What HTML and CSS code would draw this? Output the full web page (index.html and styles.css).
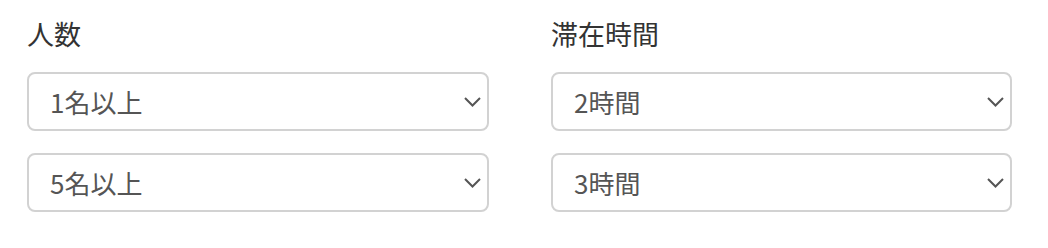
FILE: index.html
```html
<!DOCTYPE html>
<html lang="ja">
<head>
<meta charset="utf-8">
<link rel="stylesheet" href="styles.css">
</head>
<body>
<div class="form">
  <div class="col">
    <div class="label">人数</div>
    <div class="select"><span class="value">1名以上</span><svg class="chev" width="17" height="10" viewBox="0 0 17 10"><path d="M1 1 L8.5 8.5 L16 1" fill="none" stroke="#555" stroke-width="2"/></svg></div>
    <div class="select"><span class="value">5名以上</span><svg class="chev" width="17" height="10" viewBox="0 0 17 10"><path d="M1 1 L8.5 8.5 L16 1" fill="none" stroke="#555" stroke-width="2"/></svg></div>
  </div>
  <div class="col">
    <div class="label">滞在時間</div>
    <div class="select"><span class="value">2時間</span><svg class="chev" width="17" height="10" viewBox="0 0 17 10"><path d="M1 1 L8.5 8.5 L16 1" fill="none" stroke="#555" stroke-width="2"/></svg></div>
    <div class="select"><span class="value">3時間</span><svg class="chev" width="17" height="10" viewBox="0 0 17 10"><path d="M1 1 L8.5 8.5 L16 1" fill="none" stroke="#555" stroke-width="2"/></svg></div>
  </div>
</div>
</body>
</html>
```
FILE: styles.css
```css
html, body {
  margin: 0;
  padding: 0;
  background: #fff;
}
body {
  font-family: "Noto Sans CJK JP", "Noto Sans", sans-serif;
}
.form {
  display: grid;
  grid-template-columns: 462px 461px;
  column-gap: 62px;
  padding: 17px 0 0 27px;
}
.col {
  display: flex;
  flex-direction: column;
}
.label {
  font-size: 27px;
  line-height: 34px;
  color: #333;
  margin-bottom: 21px;
}
.select {
  box-sizing: border-box;
  height: 59px;
  border: 2px solid #d2d2d2;
  border-radius: 8px;
  display: flex;
  align-items: center;
  justify-content: space-between;
  padding: 0 6px 0 21px;
  margin-bottom: 22px;
}
.value {
  font-size: 26px;
  color: #555;
  line-height: 1;
}
.chev {
  display: block;
}
```
